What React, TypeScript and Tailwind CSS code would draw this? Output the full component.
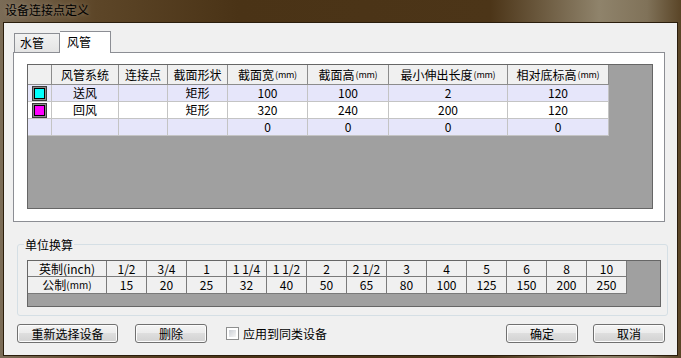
import React from 'react';

const font = { fontFamily: '"Noto Sans CJK SC", "Liberation Sans", sans-serif' };

const headers = ['', '风管系统', '连接点', '截面形状', '截面宽', '截面高', '最小伸出长度', '相对底标高'];

const rows = [
  { color: 'bg-[#00ffff]', cells: ['送风', '', '矩形', '100', '100', '2', '120'], bg: 'bg-[#e6e6fa]' },
  { color: 'bg-[#ff00ff]', cells: ['回风', '', '矩形', '320', '240', '200', '120'], bg: 'bg-white' },
  { color: '', cells: ['', '', '', '0', '0', '0', '0'], bg: 'bg-[#e6e6fa]' },
];

const inch = ['1/2', '3/4', '1', '1 1/4', '1 1/2', '2', '2 1/2', '3', '4', '5', '6', '8', '10'];
const metric = ['15', '20', '25', '32', '40', '50', '65', '80', '100', '125', '150', '200', '250'];

const Swatch: React.FC<{ color: string }> = ({ color }) => (
  <div className="w-[15px] h-[15px] border border-[#3a3a3a] bg-[#8a8a8a] p-[1px]">
    <div className={`w-full h-full border border-black ${color}`} />
  </div>
);

const Button: React.FC<{ label: string; w: string }> = ({ label, w }) => (
  <button
    className={`${w} h-[19px] rounded-[3px] border border-[#707070] bg-[linear-gradient(#f4f4f4,#ececec_45%,#dedede_50%,#d2d2d2)] text-[12px] leading-[16px] text-black shadow-[inset_0_0_0_1px_#fcfcfc]`}
  >
    {label}
  </button>
);

export default function App() {
  return (
    <div
      className="w-[681px] h-[358px] flex flex-col overflow-hidden bg-[linear-gradient(90deg,#7b6c57_0%,#5d4628_14%,#4a3316_35%,#4c3518_72%,#8f836b_88%,#807259_95%,#5a4527_100%)]"
      style={font}
    >
      <div className="h-[22px] pl-[5px] pt-[3px] text-[12px] leading-[14px] text-black [text-shadow:0_0_5px_rgba(255,255,255,0.3)]">
        设备连接点定义
      </div>
      <div className="mx-[3px] h-[334px] border border-[#2a1d0c] bg-[#f0f0f0] flex flex-col text-[12px] text-black">
        {/* tabs */}
        <div className="mt-[8px] ml-[10px] h-[21px] flex items-end">
          <div className="h-[19px] w-[46px] border border-b-0 border-[#8c8e94] bg-[linear-gradient(#f2f2f2,#e4e4e4)] pl-[5px] leading-[18px]">
            水管
          </div>
          <div className="relative z-10 -mb-px h-[22px] w-[51px] border border-b-0 border-l-0 border-[#8c8e94] bg-white pl-[7px] leading-[19px]">
            风管
          </div>
        </div>
        {/* panel */}
        <div className="ml-[9px] w-[652px] h-[170px] border border-[#8c8e94] bg-white pt-[11px] pl-[13px]">
          <div className="w-[626px] h-[145px] border border-[#666666] bg-[#a0a0a0]">
            <div className="grid grid-cols-[24px_67px_49px_60px_80px_81px_119px_101px] w-fit">
              {headers.map((h, i) => (
                <div
                  key={i}
                  className="h-[20px] flex items-center justify-center bg-[#f0f0f0] border-r border-b border-[#8c8c8c] leading-[14px]"
                >
                  {h}
                  {i >= 4 && <span className="text-[9px] ml-[1px] tracking-tight">(mm)</span>}
                </div>
              ))}
              {rows.map((r, ri) => (
                <React.Fragment key={ri}>
                  <div className={`h-[17px] flex items-center justify-center border-r border-b border-[#c4c4c4] ${r.bg}`}>
                    {r.color && <Swatch color={r.color} />}
                  </div>
                  {r.cells.map((c, ci) => (
                    <div
                      key={ci}
                      className={`h-[17px] flex items-center justify-center border-r border-b border-[#c4c4c4] leading-[14px] ${r.bg}`}
                    >
                      {c}
                    </div>
                  ))}
                </React.Fragment>
              ))}
            </div>
          </div>
        </div>
        {/* unit conversion */}
        <fieldset className="mt-[16px] ml-[13px] w-[651px] border border-[#d5dfe5] rounded-[3px] pt-[9px] pl-[9px] pb-[8px]">
          <legend className="-ml-[3px] px-[1px] text-[12px] leading-[13px]">单位换算</legend>
          <div className="w-[634px] h-[47px] border border-[#666666] bg-[#a0a0a0]">
            <div className="grid grid-cols-[79px_repeat(13,40px)] w-fit">
              <div className="h-[16px] flex items-center justify-center bg-[#f0f0f0] border-r border-b border-[#7a7a7a] leading-[14px]">
                英制(inch)
              </div>
              {inch.map((v, i) => (
                <div
                  key={i}
                  className="h-[16px] flex items-center justify-center bg-[#f0f0f0] border-r border-b border-[#7a7a7a] leading-[14px] whitespace-pre"
                >
                  {v}
                </div>
              ))}
              <div className="h-[17px] flex items-center justify-center bg-[#f0f0f0] border-r border-b border-[#7a7a7a] leading-[14px]">
                公制<span className="text-[10px]">(mm)</span>
              </div>
              {metric.map((v, i) => (
                <div
                  key={i}
                  className="h-[17px] flex items-center justify-center bg-[#f0f0f0] border-r border-b border-[#7a7a7a] leading-[14px]"
                >
                  {v}
                </div>
              ))}
            </div>
          </div>
        </fieldset>
        {/* buttons */}
        <div className="mt-[8px] ml-[13px] mr-[12px] flex items-center">
          <Button label="重新选择设备" w="w-[101px]" />
          <div className="ml-[17px]">
            <Button label="删除" w="w-[72px]" />
          </div>
          <label className="ml-[19px] flex items-center gap-[4px]">
            <span className="w-[13px] h-[13px] border border-[#8e8f8f] bg-white p-[2px]">
              <span className="block w-full h-full bg-[linear-gradient(135deg,#cbcfd5,#f6f6f6)]" />
            </span>
            <span className="leading-[14px]">应用到同类设备</span>
          </label>
          <div className="ml-auto flex gap-[15px]">
            <Button label="确定" w="w-[72px]" />
            <Button label="取消" w="w-[72px]" />
          </div>
        </div>
      </div>
    </div>
  );
}
